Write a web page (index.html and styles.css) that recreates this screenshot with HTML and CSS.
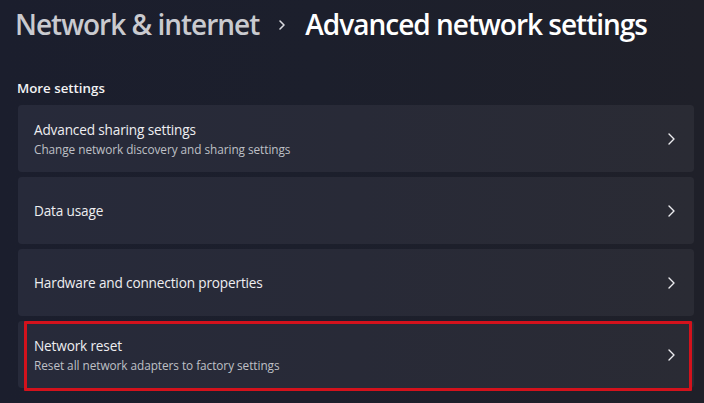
FILE: index.html
```html
<!DOCTYPE html>
<html lang="en">
<head>
<meta charset="utf-8">
<title>Advanced network settings</title>
<link rel="stylesheet" href="styles.css">
</head>
<body>
<div class="page">
  <header class="crumbs">
    <span class="crumb-parent">Network &amp; internet</span>
    <svg class="crumb-sep" width="8" height="12" viewBox="0 0 8 12"><path d="M2 2 L6 6 L2 10" fill="none" stroke="#d9dadf" stroke-width="1.6" stroke-linecap="round" stroke-linejoin="round"/></svg>
    <span class="crumb-current">Advanced network settings</span>
  </header>

  <h2 class="section-label">More settings</h2>

  <div class="list">
    <div class="card">
      <div class="card-text">
        <div class="card-title">Advanced sharing settings</div>
        <div class="card-sub">Change network discovery and sharing settings</div>
      </div>
      <svg class="chev" width="10" height="14" viewBox="0 0 10 14"><path d="M3 2 L8 7 L3 12" fill="none" stroke="#ececef" stroke-width="1.4" stroke-linecap="round" stroke-linejoin="round"/></svg>
    </div>
    <div class="card">
      <div class="card-text">
        <div class="card-title">Data usage</div>
      </div>
      <svg class="chev" width="10" height="14" viewBox="0 0 10 14"><path d="M3 2 L8 7 L3 12" fill="none" stroke="#ececef" stroke-width="1.4" stroke-linecap="round" stroke-linejoin="round"/></svg>
    </div>
    <div class="card">
      <div class="card-text">
        <div class="card-title">Hardware and connection properties</div>
      </div>
      <svg class="chev" width="10" height="14" viewBox="0 0 10 14"><path d="M3 2 L8 7 L3 12" fill="none" stroke="#ececef" stroke-width="1.4" stroke-linecap="round" stroke-linejoin="round"/></svg>
    </div>
    <div class="card card-marked">
      <div class="card-text">
        <div class="card-title">Network reset</div>
        <div class="card-sub">Reset all network adapters to factory settings</div>
      </div>
      <svg class="chev" width="10" height="14" viewBox="0 0 10 14"><path d="M3 2 L8 7 L3 12" fill="none" stroke="#ececef" stroke-width="1.4" stroke-linecap="round" stroke-linejoin="round"/></svg>
      <div class="mark"></div>
    </div>
  </div>
</div>
</body>
</html>
```

FILE: styles.css
```css
html, body {
  margin: 0;
  padding: 0;
}
body {
  width: 704px;
  height: 403px;
  overflow: hidden;
  background: linear-gradient(90deg, #1b1e2d 0%, #1c1f2c 45%, #1f2029 100%);
  font-family: "Open Sans", "Noto Sans", sans-serif;
  color: #ffffff;
}
.page {
  padding: 6px 10px 0 18px;
}
.crumbs {
  display: flex;
  align-items: center;
  margin-left: -3px;
  height: 36px;
  font-size: 28px;
  font-weight: 600;
  line-height: 36px;
  letter-spacing: -1px;
  white-space: nowrap;
}
.crumb-parent {
  color: #c9cacf;
}
.crumb-sep {
  margin: 2px 19px 0 19px;
}
.crumb-current {
  color: #ffffff;
}
.section-label {
  margin: 36px 0 0 -1px;
  font-size: 13.3px;
  font-weight: 600;
  line-height: 20px;
  color: #f2f2f4;
}
.list {
  display: flex;
  flex-direction: column;
  gap: 5px;
  margin-top: 7px;
}
.card {
  position: relative;
  display: flex;
  align-items: center;
  height: 67px;
  padding: 0 18px 0 16px;
  box-sizing: border-box;
  background: linear-gradient(90deg, #272a3a 0%, #282a37 50%, #2a2b34 100%);
  border-radius: 4px;
}
.card-text {
  flex: 1;
  display: flex;
  flex-direction: column;
  gap: 2px;
}
.card-title {
  font-size: 13.6px;
  line-height: 19px;
  color: #eeeef1;
  letter-spacing: -0.15px;
}
.card-sub {
  font-size: 11.8px;
  line-height: 16px;
  color: #bfc0c6;
  letter-spacing: -0.05px;
}
.chev {
  flex: none;
}
.mark {
  position: absolute;
  left: 6px;
  right: 2px;
  top: 0;
  bottom: -3px;
  border: 3px solid #d3121c;
  border-radius: 1px;
  pointer-events: none;
}
```
